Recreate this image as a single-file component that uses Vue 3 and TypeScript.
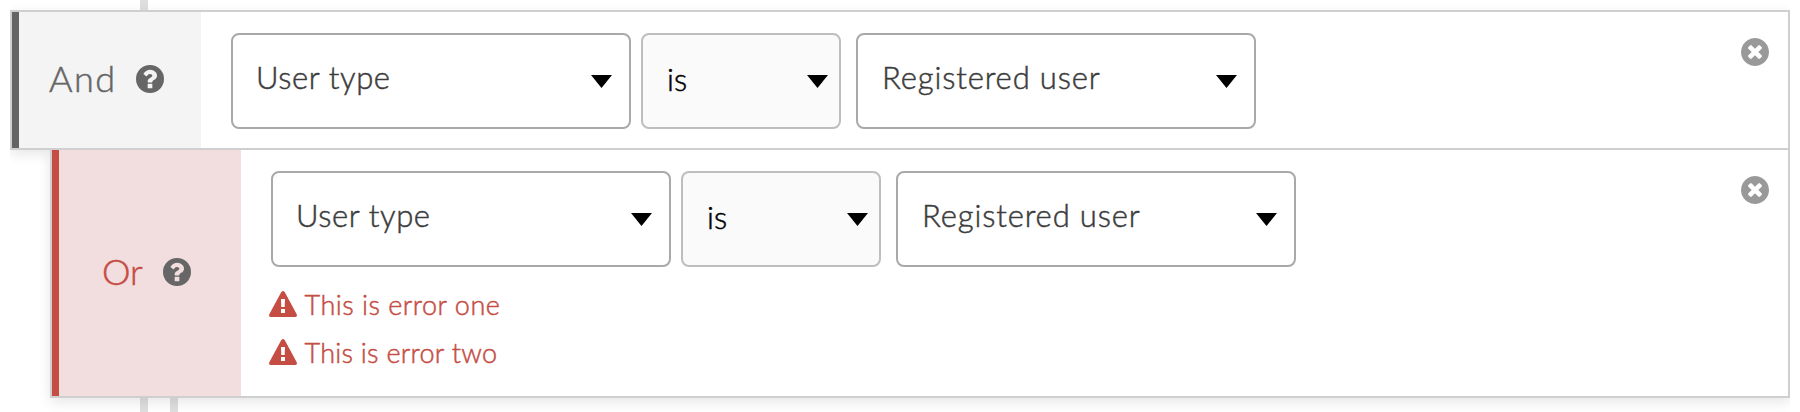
<script setup lang="ts">
interface Rule {
  kind: 'and' | 'or'
  label: string
  field: string
  operator: string
  value: string
  errors: string[]
}

const rules: Rule[] = [
  { kind: 'and', label: 'And', field: 'User type', operator: 'is', value: 'Registered user', errors: [] },
  {
    kind: 'or',
    label: 'Or',
    field: 'User type',
    operator: 'is',
    value: 'Registered user',
    errors: ['This is error one', 'This is error two'],
  },
]
</script>

<template>
  <main class="builder">
    <div class="connectors top"><i></i></div>
    <section v-for="rule in rules" :key="rule.kind" class="rule" :class="rule.kind">
      <div class="label">
        <span class="word">{{ rule.label }}</span>
        <svg class="circle-icon" viewBox="128 128 1536 1536">
          <path fill-rule="evenodd" d="M1664 896A768 768 0 1 1 128 896A768 768 0 1 1 1664 896ZM1024 1376v-192q0-14-9-23t-23-9h-192q-14 0-23 9t-9 23v192q0 14 9 23t23 9h192q14 0 23-9t9-23zM1280 704q0-88-55.5-163t-138.5-116-170-41q-243 0-371 213-15 24 8 42l132 100q7 6 19 6 16 0 25-12 53-68 86-92 34-24 86-24 48 0 85.5 26t37.5 59q0 38-20 61t-68 45q-63 28-115.5 86.5t-52.5 125.5v36q0 14 9 23t23 9h192q14 0 23-9t9-23q0-19 21.5-49.5t54.5-49.5q32-18 49-28.5t46-35 44.5-48 28-60.5 12.5-81z" />
        </svg>
      </div>
      <div class="body">
        <div class="fields">
          <div class="select field">
            <span>{{ rule.field }}</span>
            <svg class="arrow" viewBox="0 0 21 13"><path d="M0 0H21L10.5 13Z" /></svg>
          </div>
          <div class="select operator">
            <span>{{ rule.operator }}</span>
            <svg class="arrow" viewBox="0 0 21 13"><path d="M0 0H21L10.5 13Z" /></svg>
          </div>
          <div class="select value">
            <span>{{ rule.value }}</span>
            <svg class="arrow" viewBox="0 0 21 13"><path d="M0 0H21L10.5 13Z" /></svg>
          </div>
        </div>
        <ul v-if="rule.errors.length" class="errors">
          <li v-for="error in rule.errors" :key="error">
            <svg class="warning" viewBox="0 0 28 26">
              <path fill-rule="evenodd" d="M12.3 1Q14 -1 15.7 1L27.7 23.2Q28.6 25.8 26 26H2Q-.6 25.8.3 23.2ZM12 8L12.3 16H15.7L16 8ZM12 18V22H16V18Z" />
            </svg>
            <span>{{ error }}</span>
          </li>
        </ul>
      </div>
      <svg class="circle-icon remove" viewBox="128 128 1536 1536">
        <path d="M1277 1122q0-26-19-45l-181-181 181-181q19-19 19-45 0-27-19-46l-90-90q-19-19-46-19-26 0-45 19l-181 181-181-181q-19-19-45-19-27 0-46 19l-90 90q-19 19-19 46 0 26 19 45l181 181-181 181q-19 19-19 45 0 27 19 46l90 90q19 19 46 19 26 0 45-19l181-181 181 181q19 19 45 19 27 0 46-19l90-90q19-19 19-46zm387-226q0 209-103 385.5t-279.5 279.5-385.5 103-385.5-103-279.5-279.5-103-385.5 103-385.5 279.5-279.5 385.5-103 385.5 103 279.5 279.5 103 385.5z" />
      </svg>
    </section>
    <div class="connectors bottom"><i></i><i></i></div>
  </main>
</template>

<style>
body {
  background: #fff;
}
</style>

<style scoped>
* {
  box-sizing: border-box;
}
.builder {
  height: 412px;
  padding: 0 10px;
  overflow: hidden;
  clip-path: inset(0 10px);
  font-family: Lato, "Open Sans", sans-serif;
  font-weight: 300;
  color: #3c3c3c;
  -webkit-text-stroke: 0.5px currentColor;
}
.connectors {
  display: flex;
  gap: 22px;
  padding-left: 130px;
}
.connectors i {
  width: 8px;
  background: #dedede;
}
.top {
  height: 10px;
}
.bottom {
  height: 14px;
}
.rule {
  position: relative;
  display: flex;
  border: 2px solid #cfcfcf;
  background: #fff;
  box-shadow: 0 4px 12px rgba(0, 0, 0, 0.1);
}
.and {
  height: 140px;
}
.or {
  height: 248px;
  margin-left: 40px;
  border-top: 0;
  clip-path: inset(0 -20px -20px -20px);
}
.label {
  display: flex;
  align-items: center;
  width: 189px;
  border-left: 7px solid #646464;
  background: #f4f4f4;
  padding: 0 0 3px 30px;
  color: #666;
  font-size: 36px;
  line-height: 44px;
}
.word {
  width: 86.5px;
  margin-top: -2px;
  letter-spacing: 1.5px;
}
.or .label {
  border-color: #c54d44;
  background: #f2dede;
  color: #c54d44;
  padding-left: 43px;
}
.or .word {
  width: 61px;
  letter-spacing: 0;
}
.circle-icon {
  display: block;
  flex: none;
  width: 28px;
  height: 28px;
  fill: #666;
}
.remove {
  margin: 25.5px 19px 0 auto;
  fill: #999;
}
.body {
  padding: 21px 0 0 30px;
}
.fields {
  display: flex;
}
.select {
  display: flex;
  align-items: center;
  justify-content: space-between;
  width: 400px;
  height: 96px;
  border: 2px solid #a9a9a9;
  border-radius: 8px;
  padding: 0 17px 0 23px;
  font-size: 31px;
  line-height: 38px;
}
.select span {
  margin-top: -8px;
  letter-spacing: 0.6px;
}
.select.value {
  padding-left: 24px;
}
.select.value span {
  letter-spacing: 0.86px;
}
.select.operator {
  width: 200px;
  margin: 0 15px 0 10px;
  padding: 0 11px 0 24px;
  border-color: #bebebe;
  background: #fafafa;
  color: #000;
}
.select.operator span {
  margin-top: -4px;
  letter-spacing: 0;
}
.arrow {
  width: 21px;
  height: 13px;
}
.errors {
  margin: 13px 0 0 -2px;
  padding: 0;
  list-style: none;
  color: #c54d44;
  font-size: 27px;
}
.errors li {
  display: flex;
  align-items: center;
  height: 48px;
  line-height: 48px;
}
.errors span {
  padding-top: 1px;
  letter-spacing: 0.48px;
}
.errors li:last-child span {
  letter-spacing: 0.25px;
}
.warning {
  width: 28px;
  height: 26px;
  margin-right: 7.5px;
  fill: #c54d44;
}
</style>
